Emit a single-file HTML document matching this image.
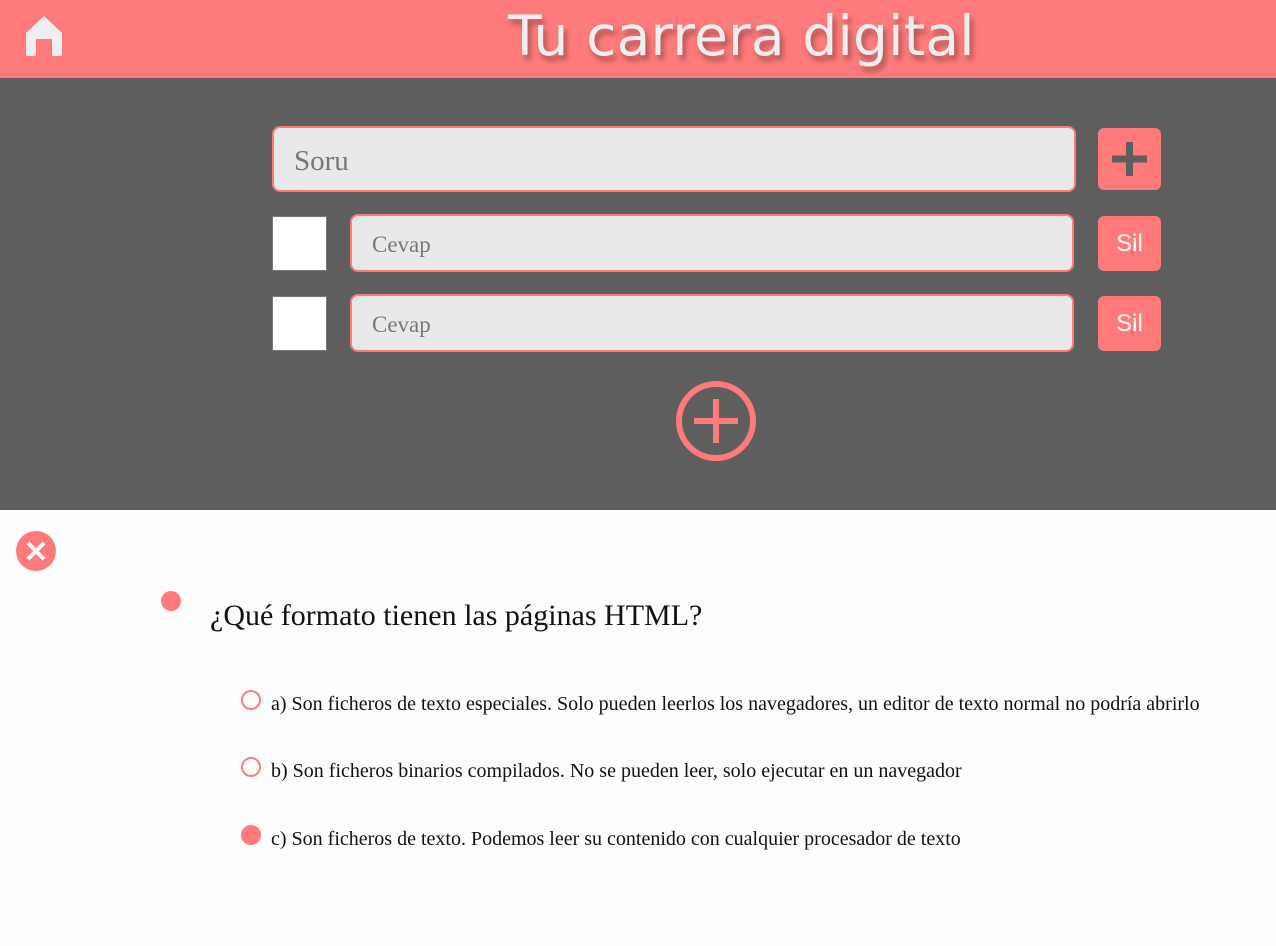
<!DOCTYPE html>
<html><head><style>
body{margin:0;width:1276px;height:946px;background:#fdfdfd;font-family:"Liberation Serif",serif;position:relative;overflow:hidden}
.hdr{position:absolute;left:0;top:0;width:1276px;height:78px;background:#ff7b7b}
.title{position:absolute;left:508px;top:4px;font-family:"DejaVu Sans",sans-serif;font-size:55px;color:#eee;text-shadow:3px 5px 6px rgba(0,0,0,.35);white-space:nowrap;letter-spacing:0.2px}
.dark{position:absolute;left:0;top:78px;width:1276px;height:432px;background:#5e5e5e}
.inp{position:absolute;box-sizing:border-box;background:#e9e9e9;border:2px solid #ff7b7b;border-radius:8px;color:#777;padding-left:20px}
.btn{position:absolute;background:#ff7b7b;border-radius:6px;color:#fff;font-family:"Liberation Sans",sans-serif;font-size:24px;text-align:center}
.cb{position:absolute;width:55px;height:55px;background:#fff;border:1px solid #777;box-sizing:border-box}
.opt{position:absolute;left:241px;font-size:20px;color:#111}
.opt i{position:absolute;left:0;top:0;width:20px;height:20px;border:2px solid #ff7b7b;border-radius:50%;box-sizing:border-box}
.opt span{position:absolute;left:30px;top:3px;white-space:nowrap}
</style></head><body>
<div class="hdr">
<svg style="position:absolute;left:25px;top:15px" width="38" height="42" viewBox="0 0 38 42"><path d="M19 1 L37 18 V41 H27 V24 H11 V41 H1 V18 Z" fill="#eee"/></svg>
<div class="title">Tu carrera digital</div>
</div>
<div class="dark"></div>
<div class="inp" style="left:272px;top:126px;width:804px;height:66px;font-size:29px;line-height:66px">Soru</div>
<div class="btn" style="left:1098px;top:128px;width:63px;height:62px"><svg width="63" height="62"><path d="M31.5 14V48M14 31H49" stroke="#5e5e5e" stroke-width="7"/></svg></div>
<div class="cb" style="left:272px;top:216px"></div>
<div class="inp" style="left:350px;top:214px;width:724px;height:58px;font-size:23px;line-height:58px">Cevap</div>
<div class="btn" style="left:1098px;top:216px;width:63px;height:55px;line-height:55px">Sil</div>
<div class="cb" style="left:272px;top:296px"></div>
<div class="inp" style="left:350px;top:294px;width:724px;height:58px;font-size:23px;line-height:58px">Cevap</div>
<div class="btn" style="left:1098px;top:296px;width:63px;height:55px;line-height:55px">Sil</div>
<svg style="position:absolute;left:674px;top:379px" width="84" height="84"><circle cx="42" cy="42" r="37" fill="none" stroke="#ff7b7b" stroke-width="6"/><path d="M42 20V64M20 42H64" stroke="#ff7b7b" stroke-width="6"/></svg>
<svg style="position:absolute;left:16px;top:531px" width="40" height="40"><circle cx="20" cy="20" r="20" fill="#ff7b7b"/><path d="M12 12L28 28M28 12L12 28" stroke="#fff" stroke-width="4"/></svg>
<div style="position:absolute;left:161px;top:591px;width:20px;height:20px;border-radius:50%;background:#ff7b7b"></div>
<div style="position:absolute;left:210px;top:599px;font-size:30px;color:#111;white-space:nowrap">¿Qué formato tienen las páginas HTML?</div>
<div class="opt" style="top:690px"><i></i><span>a) Son ficheros de texto especiales. Solo pueden leerlos los navegadores, un editor de texto normal no podría abrirlo</span></div>
<div class="opt" style="top:757px"><i></i><span>b) Son ficheros binarios compilados. No se pueden leer, solo ejecutar en un navegador</span></div>
<div class="opt" style="top:825px"><i style="background:#ff7b7b"></i><span>c) Son ficheros de texto. Podemos leer su contenido con cualquier procesador de texto</span></div>
</body></html>
